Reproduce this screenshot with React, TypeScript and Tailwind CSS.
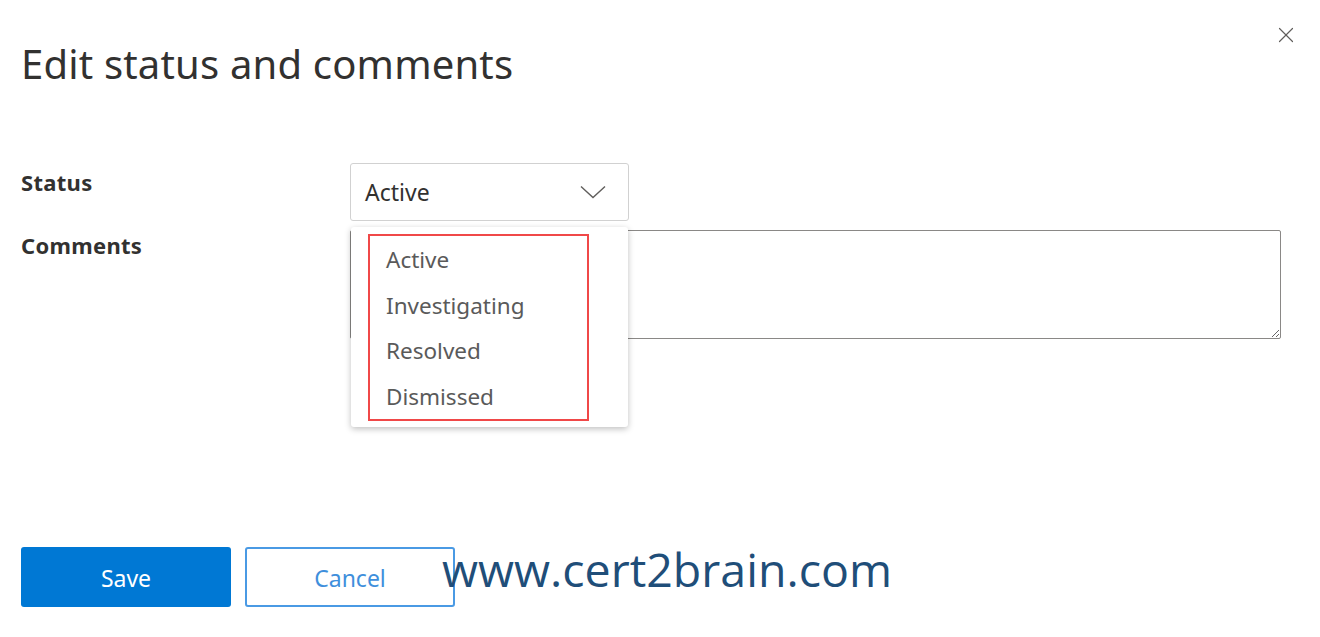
import { X } from "lucide-react";

const options = ["Active", "Investigating", "Resolved", "Dismissed"];

const App = () => {
  return (
    <div
      className="relative w-[1320px] h-[637px] bg-white overflow-hidden text-[#323130]"
      style={{ fontFamily: '"Noto Sans", "Open Sans", sans-serif' }}
    >
      <div className="flex justify-between pl-[21px] pr-[21px]">
        <h1 className="mt-[37px] text-[40px] leading-[54px] text-[#323130] tracking-[0.18px]">
          Edit status and comments
        </h1>
        <button className="mt-[22px] h-[26px] w-[26px] flex items-center justify-center text-[#605e5c]">
          <X size={28} strokeWidth={1.1} />
        </button>
      </div>

      <div className="mt-[72px] pl-[21px] flex flex-col gap-[9px]">
        <div className="flex">
          <label className="w-[329px] pt-[5px] text-[22px] font-bold leading-[28px] tracking-[0.3px] text-[#323130]">
            Status
          </label>
          <div className="relative">
            <div className="w-[279px] h-[58px] border border-[#d1d1d1] rounded-[3px] flex items-center justify-between pl-[14px] pr-[22px] text-[23px]">
              <span>Active</span>
              <svg width="26" height="14" viewBox="0 0 26 14" fill="none" className="text-[#605e5c]">
                <path d="M1 1.5 L13 12.5 L25 1.5" stroke="currentColor" strokeWidth="1.4" />
              </svg>
            </div>
            <div className="absolute left-[1px] top-[64px] z-10 w-[277px] h-[200px] bg-white rounded-[3px] shadow-[0_2px_6px_rgba(0,0,0,0.25)] pl-[17px] pt-[7px]">
              <div className="w-[221px] h-[187px] border-2 border-[#f04848] flex flex-col pl-[16px] pt-[9px] gap-[15.5px]">
                {options.map((o) => (
                  <span key={o} className="text-[22.5px] leading-[30px] text-[#5a5a5a]">
                    {o}
                  </span>
                ))}
              </div>
            </div>
          </div>
        </div>
        <div className="flex">
          <label className="w-[329px] pt-[1px] text-[22px] font-bold leading-[28px] tracking-[0.3px] text-[#323130]">
            Comments
          </label>
          <textarea className="w-[931px] h-[109px] border border-[#8a8886] rounded-[2px] resize" />
        </div>
      </div>

      <div className="absolute left-[21px] top-[547px] flex gap-[14px]">
        <button className="w-[210px] h-[60px] pt-[2px] rounded-[3px] bg-[#0078d4] text-white text-[23px]">
          Save
        </button>
        <button className="w-[210px] h-[60px] pt-[2px] rounded-[3px] border-2 border-[#4a9ae4] text-[#3f8fdc] text-[23px] bg-white">
          Cancel
        </button>
      </div>

      <div
        className="absolute left-[442px] top-[538px] text-[46.5px] leading-[62px] text-[#1f4e79]"
        style={{ fontFamily: '"Open Sans", "Noto Sans", sans-serif' }}
      >
        www.cert2brain.com
      </div>
    </div>
  );
};

export default App;
